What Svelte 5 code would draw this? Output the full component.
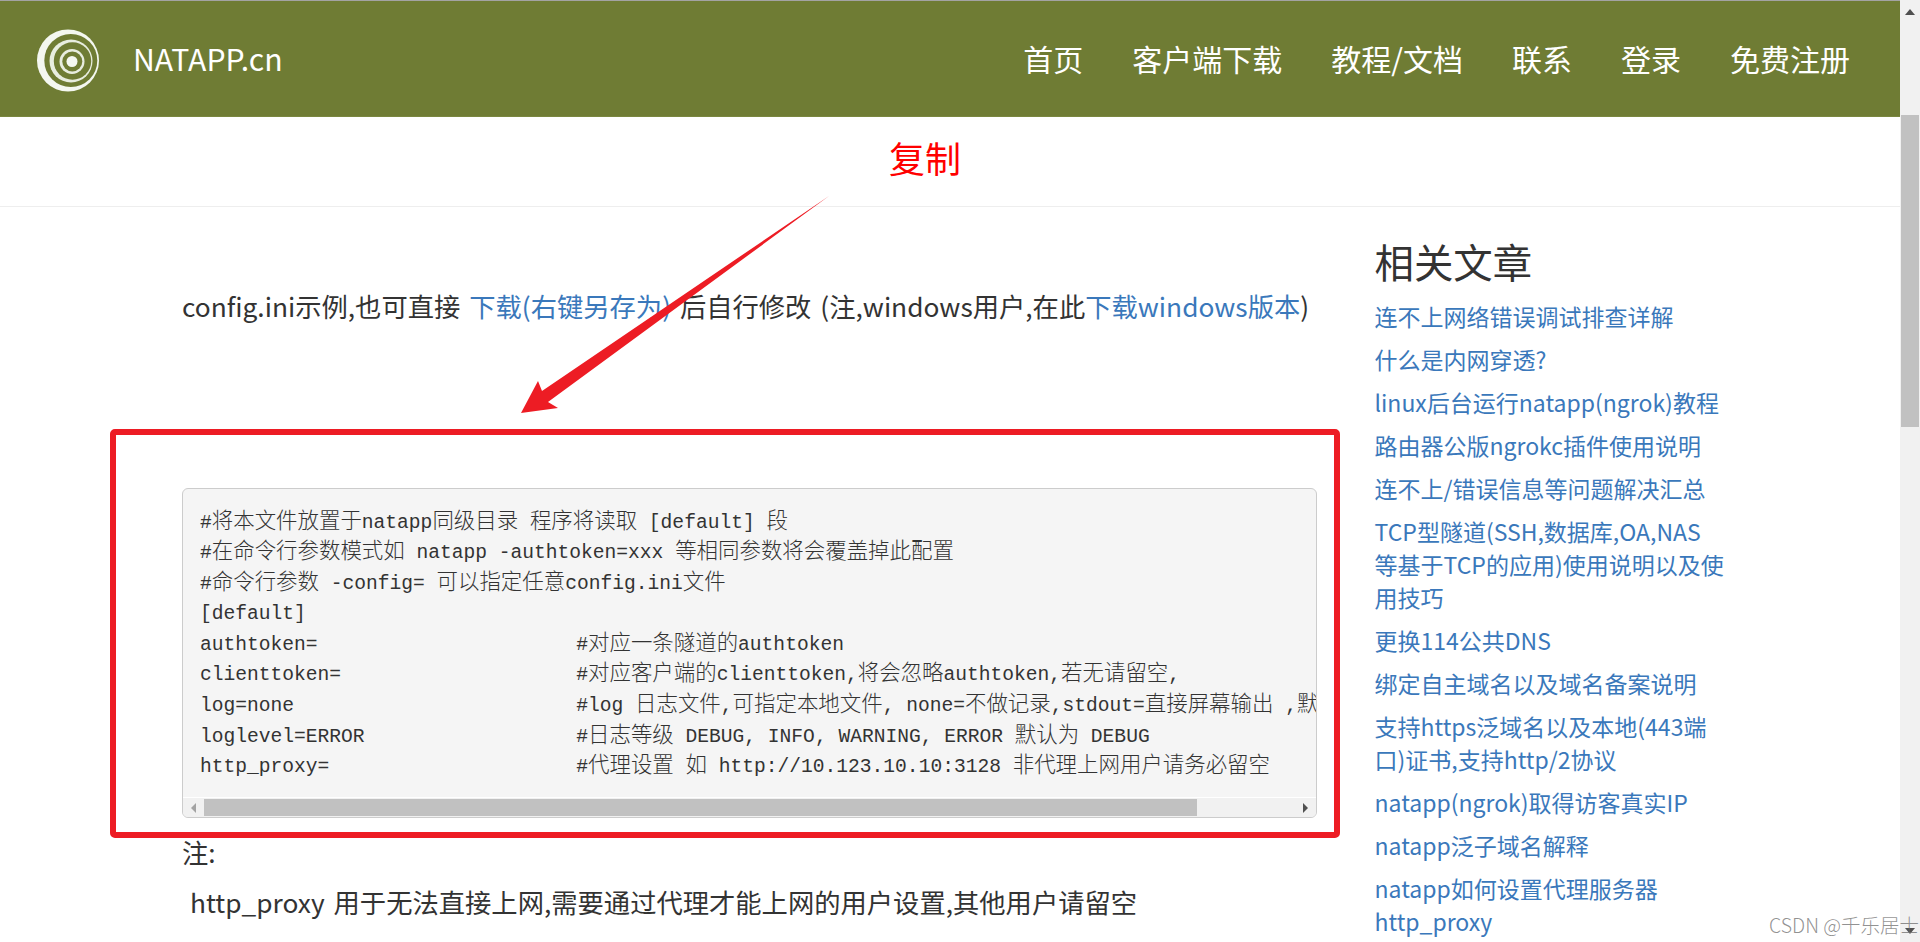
<script>
  const navItems = ['首页', '客户端下载', '教程/文档', '联系', '登录', '免费注册'];

  // \n marks where the reference column wraps
  const related = [
    '连不上网络错误调试排查详解',
    '什么是内网穿透?',
    'linux后台运行natapp(ngrok)教程',
    '路由器公版ngrokc插件使用说明',
    '连不上/错误信息等问题解决汇总',
    'TCP型隧道(SSH,数据库,OA,NAS\n等基于TCP的应用)使用说明以及使\n用技巧',
    '更换114公共DNS',
    '绑定自主域名以及域名备案说明',
    '支持https泛域名以及本地(443端\n口)证书,支持http/2协议',
    'natapp(ngrok)取得访客真实IP',
    'natapp泛子域名解释',
    'natapp如何设置代理服务器\nhttp_proxy'
  ];

  const config = [
    '#将本文件放置于natapp同级目录 程序将读取 [default] 段',
    '#在命令行参数模式如 natapp -authtoken=xxx 等相同参数将会覆盖掉此配置',
    '#命令行参数 -config= 可以指定任意config.ini文件',
    '[default]',
    'authtoken=                      #对应一条隧道的authtoken',
    'clienttoken=                    #对应客户端的clienttoken,将会忽略authtoken,若无请留空,',
    'log=none                        #log 日志文件,可指定本地文件, none=不做记录,stdout=直接屏幕输出 ,默认为none',
    'loglevel=ERROR                  #日志等级 DEBUG, INFO, WARNING, ERROR 默认为 DEBUG',
    'http_proxy=                     #代理设置 如 http://10.123.10.10:3128 非代理上网用户请务必留空'
  ];

  // latin and cjk runs get different font sizes, so split each line
  function runs(line) {
    return line.match(/[\u4e00-\u9fff]+|[^\u4e00-\u9fff]+/g).map((text) => ({
      text,
      cjk: /[\u4e00-\u9fff]/.test(text)
    }));
  }
</script>

<div class="page">
  <div class="content">
    <header class="navbar">
      <a class="brand" href="#top">
        <svg class="logo" viewBox="0 0 63 63" aria-hidden="true">
          <circle cx="31" cy="31.5" r="31" fill="#f4f7f0" />
          <circle cx="33.8" cy="31.5" r="26.5" fill="#6f7c34" />
          <circle cx="34" cy="32" r="21.5" fill="#e8eddf" />
          <circle cx="35.5" cy="32" r="18.7" fill="#6f7c34" />
          <circle cx="35" cy="32.5" r="12.5" fill="#e8eddf" />
          <circle cx="35.3" cy="32.5" r="10" fill="#6f7c34" />
          <circle cx="35" cy="32.5" r="5.5" fill="#f4f7f0" />
        </svg>
        <span>NATAPP.cn</span>
      </a>
      <nav class="nav">
        {#each navItems as item}
          <a href="#top">{item}</a>
        {/each}
      </nav>
    </header>

    <div class="strip"></div>

    <div class="main">
      <article class="article">
        <p class="intro">config.ini示例,也可直接 <a href="#top">下载(右键另存为)</a> 后自行修改 (注,windows用户,在此<a href="#top">下载windows版本</a>)</p>

        <div class="code-box">
          <pre class="code">{#each config as line}<span class="line">{#each runs(line) as run}<span class:cjk={run.cjk}>{run.text}</span>{/each}</span>{/each}</pre>
          <div class="hbar">
            <span class="arrow left"></span>
            <div class="hbar-track"><div class="hbar-thumb"></div></div>
            <span class="arrow right"></span>
          </div>
        </div>

        <p class="note-head">注:</p>
        <p class="note">http_proxy 用于无法直接上网,需要通过代理才能上网的用户设置,其他用户请留空</p>
        <p class="note next">authtoken 对应一条隧道,clienttoken 对应客户端,clienttoken 优先于 authtoken</p>
      </article>

      <aside class="sidebar">
        <h3>相关文章</h3>
        <ul>
          {#each related as title}
            <li><a href="#top">{title}</a></li>
          {/each}
        </ul>
      </aside>
    </div>
  </div>

  <div class="vbar">
    <span class="varrow up"></span>
    <div class="vthumb"></div>
    <span class="varrow down"></span>
  </div>

  <!-- annotations drawn over the screenshot -->
  <svg class="marks" viewBox="0 0 1920 942" aria-hidden="true">
    <rect x="113" y="432" width="1224" height="403" rx="2" fill="none" stroke="#ed1c24" stroke-width="6" />
    <polygon points="829,196 548,402 558,408 521,413 538,381 542,391" fill="#ed1c24" />
  </svg>
  <div class="copy-label">复制</div>
  <div class="watermark">CSDN @千乐居士</div>
</div>

<style>
  :global(body) {
    margin: 0;
    background: #fff;
    overflow: hidden;
  }

  .page {
    position: relative;
    display: flex;
    width: 1920px;
    height: 942px;
    overflow: hidden;
    color: #333;
    font-family: "Noto Sans CJK SC", "Noto Sans", sans-serif;
  }

  .content {
    flex: 1;
    min-width: 0;
  }

  a {
    color: #3a78bb;
    text-decoration: none;
  }

  .navbar {
    display: flex;
    align-items: center;
    justify-content: space-between;
    height: 113px;
    padding: 0 50px 2px 37px;
    background: #6f7c34;
    border-top: 1px solid #a3a3a3;
    border-bottom: 1px solid #7a8740;
  }

  .brand {
    display: flex;
    align-items: center;
    gap: 33px;
    color: #fff;
    font-size: 30.2px;
  }

  .logo {
    width: 63px;
    height: 63px;
    margin-top: 6px;
  }

  .nav {
    display: flex;
    gap: 49px;
  }

  .nav a {
    color: #fff;
    font-size: 30px;
    line-height: 40px;
  }

  .strip {
    height: 89px;
    border-bottom: 1px solid #eee;
  }

  .main {
    display: flex;
    align-items: flex-start;
    padding-left: 182px;
  }

  .article {
    width: 1135.5px;
    flex: none;
  }

  .intro {
    margin: 80px 0 0;
    font-size: 26.3px;
    line-height: 38px;
    word-spacing: 3px;
    white-space: nowrap;
  }

  .code-box {
    margin-top: 163px;
    width: 1135px;
    height: 330px;
    box-sizing: border-box;
    display: flex;
    flex-direction: column;
    background: #f5f5f5;
    border: 1px solid #ccc;
    border-radius: 6px;
    overflow: hidden;
  }

  .code {
    flex: 1;
    margin: 0;
    padding: 18.5px 17px 0;
    overflow: hidden;
    color: #333;
    font-family: "Liberation Mono", monospace;
    font-size: 19.6px;
    line-height: 30.6px;
    white-space: pre;
  }

  .line {
    display: block;
    height: 30.6px;
  }

  .cjk {
    font-family: "Noto Sans CJK SC", sans-serif;
    font-size: 21.45px;
    font-weight: 300;
    line-height: 0;
  }

  .hbar {
    display: flex;
    align-items: center;
    height: 19px;
    background: #f1f1f1;
    border-top: 1px solid #fff;
  }

  .hbar-track {
    flex: 1;
  }

  .hbar-thumb {
    width: 993px;
    height: 17px;
    background: #c1c1c1;
  }

  .arrow {
    width: 0;
    height: 0;
    margin: 0 8px;
    border-top: 5px solid transparent;
    border-bottom: 5px solid transparent;
  }

  .arrow.left {
    border-right: 5px solid #a3a3a3;
  }

  .arrow.right {
    border-left: 5px solid #505050;
  }

  .note-head {
    margin: 15px 0 0;
    font-size: 26.3px;
    line-height: 38px;
  }

  .note {
    margin: 12px 0 0 8px;
    font-size: 26.3px;
    line-height: 38px;
    word-spacing: 3px;
    white-space: nowrap;
  }

  .note.next {
    margin-top: 15px;
  }

  .sidebar {
    width: 360px;
    margin-left: 57px;
  }

  .sidebar h3 {
    margin: 29px 0 0;
    font-size: 39.4px;
    font-weight: 400;
    line-height: 50px;
  }

  .sidebar ul {
    margin: 14px 0 0;
    padding: 0;
    list-style: none;
  }

  .sidebar li {
    margin-bottom: 10px;
    font-size: 23px;
    line-height: 33px;
    white-space: pre-line;
  }

  .vbar {
    position: relative;
    flex: none;
    width: 20px;
    background: #f1f1f1;
  }

  .vthumb {
    position: absolute;
    top: 115px;
    left: 1px;
    width: 18px;
    height: 312px;
    background: #c1c1c1;
  }

  .varrow {
    position: absolute;
    left: 5px;
    width: 0;
    height: 0;
    border-left: 5px solid transparent;
    border-right: 5px solid transparent;
  }

  .varrow.up {
    top: 9px;
    border-bottom: 6px solid #505050;
  }

  .varrow.down {
    bottom: 8px;
    border-top: 6px solid #505050;
  }

  .marks {
    position: absolute;
    top: 0;
    left: 0;
    width: 1920px;
    height: 942px;
    pointer-events: none;
  }

  .copy-label {
    position: absolute;
    top: 132px;
    left: 889px;
    color: #f00;
    font-size: 36px;
    line-height: 50px;
  }

  .watermark {
    position: absolute;
    top: 911px;
    left: 1769px;
    color: rgba(110, 110, 110, 0.75);
    font-size: 19.5px;
    font-weight: 300;
    line-height: 28px;
    white-space: nowrap;
  }
</style>
